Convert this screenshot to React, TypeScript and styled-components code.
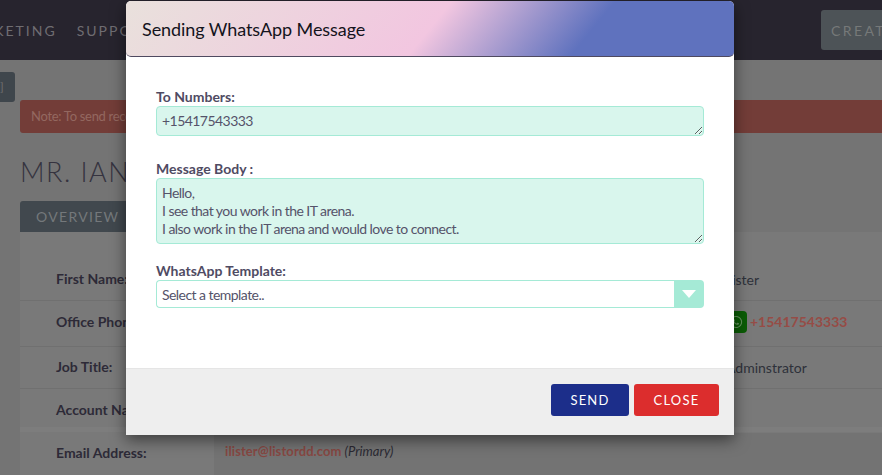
import React from "react";
import styled, { createGlobalStyle } from "styled-components";
import { FaWhatsapp } from "react-icons/fa";

const Global = createGlobalStyle`
  html, body { margin: 0; padding: 0; height: 100%; overflow: hidden; background: #747474; }
  * { box-sizing: border-box; }
  body { font-family: Lato, "Open Sans", sans-serif; }
`;

const Page = styled.div`
  width: 882px;
  height: 475px;
  overflow: hidden;
  position: relative;
  background: #747474;
`;

const Nav = styled.header`
  height: 60px;
  background: #27242e;
  display: flex;
  align-items: center;
  justify-content: space-between;
  overflow: hidden;
`;

const NavMenu = styled.nav`
  display: flex;
  gap: 20px;
  margin-left: -43px;
  white-space: nowrap;
`;

const NavItem = styled.span`
  font-size: 14px;
  letter-spacing: 2px;
  color: #6f6d72;
`;

const CreateButton = styled.button`
  flex: none;
  width: 100px;
  height: 40px;
  margin-right: -39px;
  border: 0;
  border-radius: 3px;
  background: #4d5357;
  color: #767979;
  font: 400 14px Lato, sans-serif;
  letter-spacing: 2.4px;
  text-align: left;
  padding: 0 10px;
  white-space: nowrap;
`;

const SideToggle = styled.div`
  width: 15px;
  height: 30px;
  margin-top: 12px;
  background: #3f464c;
  border-radius: 0 3px 3px 0;
  color: #707070;
  font-size: 12px;
  line-height: 30px;
  text-align: left;
  overflow: hidden;
`;

const Main = styled.main`
  margin-left: 20px;
`;

const Alert = styled.div`
  height: 33px;
  margin-top: -2px;
  background: #733d38;
  border-radius: 3px 0 0 3px;
  color: #936860;
  font-size: 13px;
  letter-spacing: -0.3px;
  line-height: 33px;
  padding-left: 11px;
  white-space: nowrap;
`;

const Title = styled.h1`
  margin: 23px 0 0;
  height: 45px;
  font-weight: 300;
  font-size: 27px;
  line-height: 32px;
  letter-spacing: 1.5px;
  color: #35333f;
  white-space: nowrap;
`;

const Tab = styled.div`
  width: 150px;
  height: 32px;
  background: #41484e;
  border-radius: 3px 3px 0 0;
  color: #74787b;
  font-size: 14px;
  line-height: 32px;
  letter-spacing: 1.3px;
  padding-left: 16px;
`;

const Panel = styled.section`
  margin-top: -1px;
  background: #797979;
  padding-top: 26px;
`;

const Row = styled.div<{ $h: number; $line?: boolean }>`
  display: grid;
  grid-template-columns: 194px 506px 1fr;
  height: ${(p) => p.$h}px;
  align-items: center;
  border-top: 1px solid ${(p) => (p.$line ? "#707070" : "transparent")};
`;

const Label = styled.div<{ $up?: number; $down?: number }>`
  padding-left: 36px;
  padding-bottom: ${(p) => p.$up ?? 0}px;
  padding-top: ${(p) => p.$down ?? 0}px;
  font-size: 14px;
  font-weight: 700;
  color: #2d2a37;
  white-space: nowrap;
`;

const Value = styled.div<{ $indent?: number; $up?: number }>`
  padding-left: ${(p) => p.$indent ?? 0}px;
  padding-bottom: ${(p) => p.$up ?? 0}px;
  font-size: 14px;
  color: #2e313a;
  white-space: nowrap;
  display: flex;
  align-items: center;
  gap: 3px;
`;

const EmailCell = styled.div`
  grid-column: 2 / 4;
  align-self: stretch;
  background: #737373;
  padding: 0 0 6px 11px;
  display: flex;
  align-items: center;
  gap: 3px;
  font-size: 13px;
  color: #2a2932;
  white-space: nowrap;
`;

const RedLink = styled.span`
  color: #964c46;
  font-weight: 700;
`;

const RedMail = styled.span`
  color: #864742;
  font-weight: 700;
  font-size: 13px;
  letter-spacing: 0.1px;
`;

const Note = styled.em`
  font-style: italic;
`;

const WaBadge = styled.span`
  width: 27px;
  height: 22px;
  border-radius: 4px;
  background: #0a5c05;
  display: inline-flex;
  align-items: center;
  justify-content: center;
  color: #669560;
  font-size: 14px;
  padding-left: 4px;
`;

const Band = styled.div`
  height: 5px;
  background: #7d7d7d;
`;

const ModalLayer = styled.div`
  position: absolute;
  inset: 0;
  padding: 1px 0 0 126px;
  display: flex;
  justify-content: flex-start;
  align-items: flex-start;
`;

const Modal = styled.div`
  width: 608px;
  height: 434px;
  background: #fff;
  display: flex;
  flex-direction: column;
  box-shadow: 0 5px 15px rgba(0, 0, 0, 0.5);
  border-radius: 5px 5px 0 0;
`;

const ModalHeader = styled.div`
  height: 56px;
  flex: none;
  padding: 0 16px;
  display: flex;
  align-items: center;
  border-radius: 5px;
  border-bottom: 1px solid #4f4a60;
  background: linear-gradient(129deg, #e9e1dc 0%, #f2c6e0 50%, #5f72be 75%, #5f72be 100%);
`;

const ModalTitle = styled.h4`
  margin: 0;
  font-size: 18px;
  font-weight: 400;
  letter-spacing: -0.08px;
  color: #14141c;
`;

const ModalBody = styled.div`
  flex: 1;
  padding: 31px 30px 0;
  display: flex;
  flex-direction: column;
`;

const FieldLabel = styled.label`
  display: block;
  font-size: 14px;
  line-height: 18px;
  font-weight: 700;
  color: #4f4b63;
`;

const Field = styled.div<{ $gap: number }>`
  margin-bottom: ${(p) => p.$gap}px;
`;

const Area = styled.textarea<{ $h: number }>`
  display: block;
  width: 100%;
  height: ${(p) => p.$h}px;
  background: #d9f6ed;
  border: 1px solid #a5ead6;
  border-radius: 4px;
  padding: 5px 5px;
  font: 400 14px/18px Lato, sans-serif;
  letter-spacing: -0.55px;
  color: #55536a;
  outline: none;
`;

const SelectWrap = styled.div`
  display: flex;
  height: 28px;
`;

const Select = styled.select`
  flex: 1;
  appearance: none;
  min-width: 0;
  background: #fff;
  border: 1px solid #a5ead6;
  border-right: 0;
  border-radius: 4px 0 0 4px;
  padding: 0 5px;
  font: 400 14px Lato, sans-serif;
  letter-spacing: -0.55px;
  color: #55536a;
  outline: none;
`;

const Caret = styled.div`
  width: 30px;
  background: #a5ead6;
  border-radius: 0 4px 4px 0;
  display: flex;
  align-items: center;
  justify-content: center;
`;

const ModalFooter = styled.div`
  height: 67px;
  flex: none;
  border-top: 1px solid #e5e5e5;
  background: #eeeeee;
  padding: 15px 15px 0 0;
  display: flex;
  justify-content: flex-end;
  align-items: flex-start;
  gap: 5px;
`;

const Action = styled.button<{ $bg: string; $w: number }>`
  width: ${(p) => p.$w}px;
  height: 32px;
  border: 0;
  border-radius: 3px;
  background: ${(p) => p.$bg};
  color: #fff;
  font: 400 13px Lato, sans-serif;
  letter-spacing: 1.2px;
`;

export default function App() {
  return (
    <Page>
      <Global />
      <Nav>
        <NavMenu>
          <NavItem>MARKETING</NavItem>
          <NavItem>SUPPORT</NavItem>
        </NavMenu>
        <CreateButton>CREATE NEW</CreateButton>
      </Nav>
      <SideToggle>]</SideToggle>
      <Main>
        <Alert>Note: To send records to a WhatsApp number you must first connect.</Alert>
        <Title>MR. IAN LISTER</Title>
        <Tab>OVERVIEW</Tab>
        <Panel>
          <Row $h={42}>
            <Label $up={2}>First Name:</Label>
            <Value>Ian</Value>
            <Value $indent={5}>Lister</Value>
          </Row>
          <Row $h={46} $line>
            <Label $up={5}>Office Phone:</Label>
            <Value />
            <Value $up={4}>
              <WaBadge><FaWhatsapp /></WaBadge>
              <RedLink>+15417543333</RedLink>
            </Value>
          </Row>
          <Row $h={42} $line>
            <Label $up={2}>Job Title:</Label>
            <Value />
            <Value $indent={6}>Adminstrator</Value>
          </Row>
          <Row $h={39} $line>
            <Label $down={2}>Account Name:</Label>
            <Value />
            <Value />
          </Row>
          <Band />
          <Row $h={43}>
            <Label $up={4}>Email Address:</Label>
            <EmailCell>
              <RedMail>ilister@listordd.com</RedMail>
              <Note>(Primary)</Note>
            </EmailCell>
          </Row>
        </Panel>
      </Main>
      <ModalLayer>
        <Modal>
          <ModalHeader>
            <ModalTitle>Sending WhatsApp Message</ModalTitle>
          </ModalHeader>
          <ModalBody>
            <Field $gap={24}>
              <FieldLabel>To Numbers:</FieldLabel>
              <Area $h={30} readOnly defaultValue="+15417543333" />
            </Field>
            <Field $gap={18}>
              <FieldLabel>Message Body :</FieldLabel>
              <Area
                $h={66}
                readOnly
                defaultValue={"Hello,\nI see that you work in the IT arena.\nI also work in the IT arena and would love to connect."}
              />
            </Field>
            <Field $gap={0}>
              <FieldLabel>WhatsApp Template:</FieldLabel>
              <SelectWrap>
                <Select defaultValue="">
                  <option value="">Select a template..</option>
                </Select>
                <Caret>
                  <svg width="14" height="8" viewBox="0 0 14 8">
                    <path d="M0 0h14L7 8z" fill="#fff" />
                  </svg>
                </Caret>
              </SelectWrap>
            </Field>
          </ModalBody>
          <ModalFooter>
            <Action $bg="#1c2e8a" $w={78}>SEND</Action>
            <Action $bg="#dc2d2d" $w={85}>CLOSE</Action>
          </ModalFooter>
        </Modal>
      </ModalLayer>
    </Page>
  );
}
